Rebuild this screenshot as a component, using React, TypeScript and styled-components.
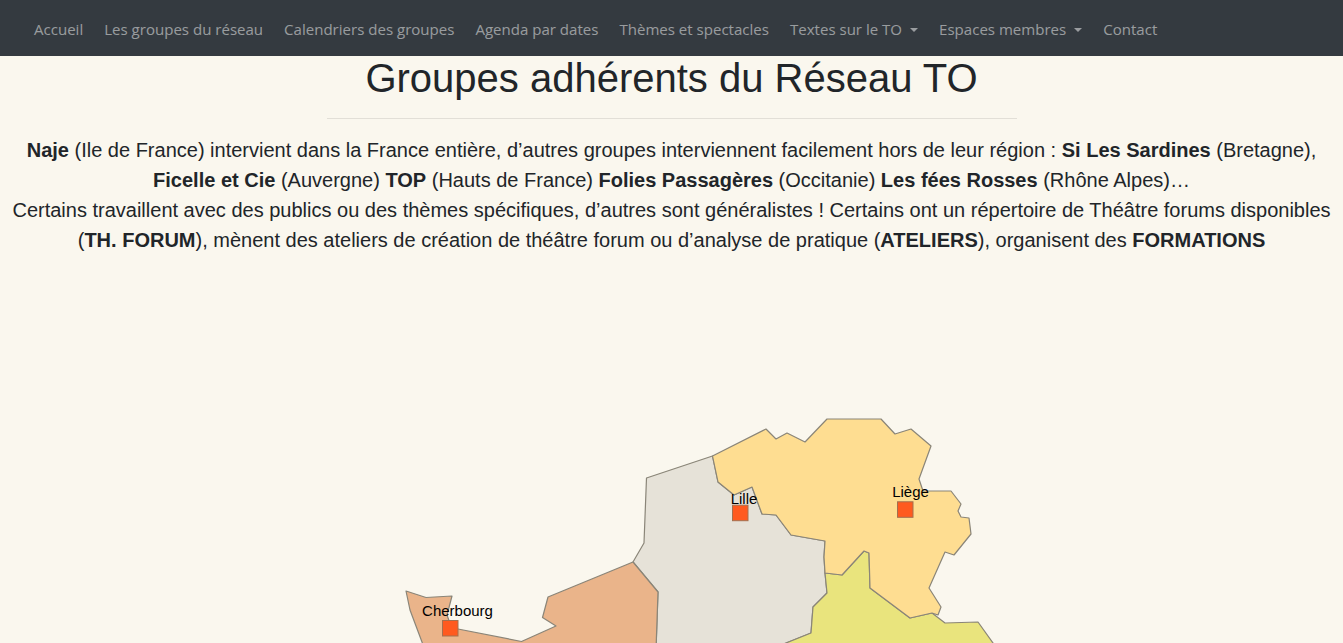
import React from "react";
import styled, { createGlobalStyle } from "styled-components";

const Global = createGlobalStyle`
  html, body { margin: 0; padding: 0; background: #faf7ee; overflow: hidden; }
  body { font-family: "Liberation Sans", Arial, sans-serif; color: #212529; }
`;
const Page = styled.div`
  height: 643px;
  display: flex;
  flex-direction: column;
  overflow: hidden;
`;
const NavBar = styled.nav`
  flex: none;
  height: 56px;
  background: #343a40;
  display: flex;
  align-items: center;
  padding: 2px 26px 0;
  box-sizing: border-box;
`;
const NavItem = styled.a<{ $caret?: boolean }>`
  font-family: "Open Sans", sans-serif;
  font-size: 15.05px;
  line-height: 24px;
  color: rgba(255, 255, 255, 0.5);
  padding: 0 8px;
  margin-right: 5px;
  white-space: nowrap;
  ${(p) =>
    p.$caret
      ? `&::after {
          content: "";
          display: inline-block;
          margin-left: 8px;
          vertical-align: 3px;
          border-top: 4px solid currentColor;
          border-left: 4px solid transparent;
          border-right: 4px solid transparent;
        }`
      : ""}
`;
const Title = styled.h1`
  margin: 0;
  font-size: 40px;
  font-weight: 400;
  line-height: 44px;
  text-align: center;
`;
const Rule = styled.hr`
  width: 690px;
  margin: 18px auto 16px;
  border: 0;
  border-top: 1px solid #e2dfd7;
`;
const Intro = styled.p`
  margin: 0;
  font-size: 20px;
  line-height: 30px;
  text-align: center;
`;
const MapFigure = styled.svg`
  display: block;
  flex: 1;
  min-height: 0;
  width: 1343px;
`;

const regions = [
  {
    fill: "#e6e2d8",
    d: "M712.5,456 L646.5,478 L644,543 L633,562 L658,592 L656,650 L786,650 L786,643 L811,633 L813,607 L827,593 L825,573 L824,557 L825,541 L791,535 L776,515 L762,514 L752,487 L734,495 L718,482 Z",
  },
  {
    fill: "#eab48a",
    d: "M406,591 L426,597.5 L452,596 L447,615 L452,629 L458,629 L521.5,641.5 L556,626 L542.5,617.5 L548,597 L633,562 L658,592 L656,650 L425,650 L410,610 Z",
  },
  {
    fill: "#e9e47d",
    d: "M825,573 L842,575 L864,551 L869,553 L870,588 L910,618 L932,613 L945,623 L978,622 L998,650 L768,650 L786,643 L811,633 L813,607 L827,593 Z",
  },
  {
    fill: "#fedd91",
    d: "M712.5,456 L766,429 L776,439 L787,433 L805,442 L827,419 L881,419 L895,434 L911,429 L931,446 L919,479 L923,491 L951,491 L961,504 L958,511 L961,517 L969,518 L971,534 L954,555 L945,552 L929,588 L941,607 L938,615 L932,613 L910,618 L870,588 L869,553 L864,551 L842,575 L825,573 L824,557 L825,541 L791,535 L776,515 L762,514 L752,487 L734,495 L718,482 Z",
  },
];

const cities = [
  { name: "Lille", x: 732.5, y: 505.2, tx: 744, ty: 504 },
  { name: "Liège", x: 897.5, y: 501.8, tx: 910.5, ty: 497 },
  { name: "Cherbourg", x: 442.5, y: 620.5, tx: 457.5, ty: 616 },
];

export default function App() {
  return (
    <Page>
      <Global />
      <NavBar>
        <NavItem>Accueil</NavItem>
        <NavItem>Les groupes du réseau</NavItem>
        <NavItem>Calendriers des groupes</NavItem>
        <NavItem>Agenda par dates</NavItem>
        <NavItem>Thèmes et spectacles</NavItem>
        <NavItem $caret>Textes sur le TO</NavItem>
        <NavItem $caret>Espaces membres</NavItem>
        <NavItem>Contact</NavItem>
      </NavBar>
      <Title>Groupes adhérents du Réseau TO</Title>
      <Rule />
      <Intro>
        <b>Naje</b> (Ile de France) intervient dans la France entière, d’autres groupes interviennent facilement hors de leur région : <b>Si Les Sardines</b> (Bretagne),
        <br />
        <b>Ficelle et Cie</b> (Auvergne) <b>TOP</b> (Hauts de France) <b>Folies Passagères</b> (Occitanie) <b>Les fées Rosses</b> (Rhône Alpes)…
        <br />
        Certains travaillent avec des publics ou des thèmes spécifiques, d’autres sont généralistes ! Certains ont un répertoire de Théâtre forums disponibles
        <br />
        (<b>TH. FORUM</b>), mènent des ateliers de création de théâtre forum ou d’analyse de pratique (<b>ATELIERS</b>), organisent des <b>FORMATIONS</b>
      </Intro>
      <MapFigure viewBox="0 255 1343 388" preserveAspectRatio="xMidYMin slice">
        {regions.map((r) => (
          <path key={r.fill} d={r.d} fill={r.fill} stroke="#8a8578" strokeWidth="1.2" strokeLinejoin="round" />
        ))}
        {cities.map((c) => (
          <g key={c.name}>
            <rect x={c.x} y={c.y} width="15.5" height="15.5" fill="#ff5a1f" stroke="#a4704f" strokeWidth="1" />
            <text x={c.tx} y={c.ty} fontSize="15" textAnchor="middle" fill="#000" fontFamily="'Liberation Sans', Arial, sans-serif">
              {c.name}
            </text>
          </g>
        ))}
      </MapFigure>
    </Page>
  );
}
